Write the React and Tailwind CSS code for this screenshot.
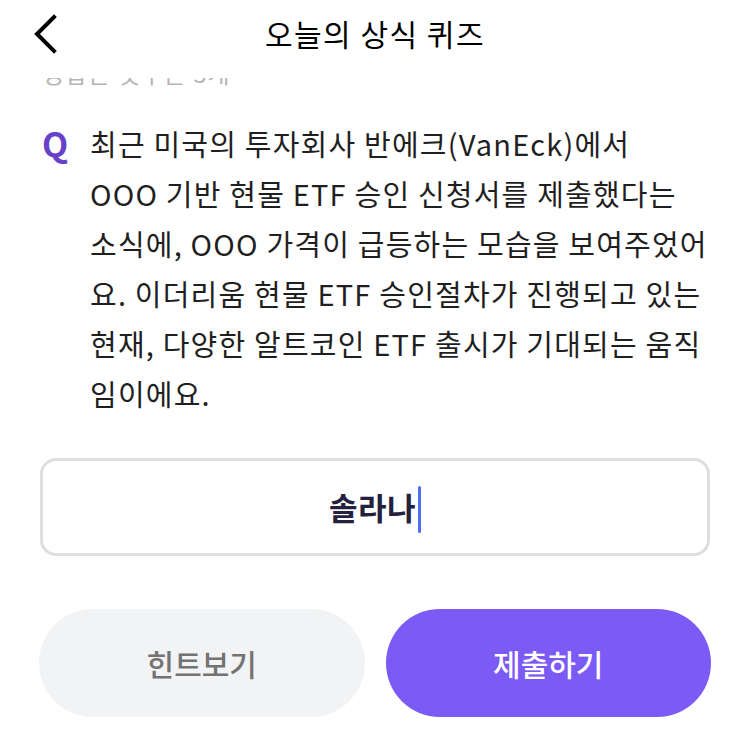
import React from "react";

const font = { fontFamily: '"Noto Sans CJK KR", "Noto Sans", sans-serif' };

function App() {
    return (
        <div className="w-[750px] h-[730px] bg-white overflow-hidden" style={font}>
            {/* Header */}
            <div className="relative h-[70px] flex items-center justify-center">
                <svg className="absolute left-[30px] top-[14px]" width="30" height="40" viewBox="0 0 30 40">
                    <path d="M24 3 L7 20 L24 37" fill="none" stroke="#000" strokeWidth="4" strokeLinecap="square" />
                </svg>
                <span className="text-[30px] text-black leading-none tracking-[1.5px] mt-[-4px]">오늘의 상식 퀴즈</span>
            </div>

            {/* scrolled-away caption, mostly hidden under the header */}
            <div className="h-[10px] mt-[8px] overflow-hidden px-[42px]">
                <p className="mt-[-20px] text-[24px] leading-[30px] tracking-[1px] text-[#b5b5b5]">정답은 갯수는 3개</p>
            </div>

            {/* Question */}
            <div className="flex px-[42px] pt-[30px]">
                <span className="w-[48px] shrink-0 text-[34px] font-bold leading-[50px] text-[#6741c9]">Q</span>
                <p className="whitespace-nowrap text-[29px] leading-[50px] text-[#1f1f1f] tracking-[1.2px]">
                    최근 미국의 투자회사 반에크(VanEck)에서<br />
                    OOO 기반 현물 ETF 승인 신청서를 제출했다는<br />
                    소식에, OOO 가격이 급등하는 모습을 보여주었어<br />
                    요. 이더리움 현물 ETF 승인절차가 진행되고 있는<br />
                    현재, 다양한 알트코인 ETF 출시가 기대되는 움직<br />
                    임이에요.
                </p>
            </div>

            {/* Answer input */}
            <div className="px-[40px] mt-[40px]">
                <div className="h-[98px] rounded-[16px] border-[3px] border-[#dedede] flex items-center justify-center">
                    <span className="text-[31px] font-bold text-[#24213f] tracking-[0.5px]">솔라나</span>
                    <span className="w-[3px] h-[47px] rounded-full bg-[#4d6ef0] ml-[2px] mt-[4px]"></span>
                </div>
            </div>

            {/* Buttons */}
            <div className="flex gap-[21px] px-[39px] mt-[53px]">
                <button className="flex-1 h-[108px] rounded-full bg-[#f2f3f5] text-[30px] font-medium text-[#737373]">힌트보기</button>
                <button className="flex-1 h-[108px] rounded-full bg-[#7b5af5] text-[30px] font-medium text-white">제출하기</button>
            </div>
        </div>
    );
}

export default App;
